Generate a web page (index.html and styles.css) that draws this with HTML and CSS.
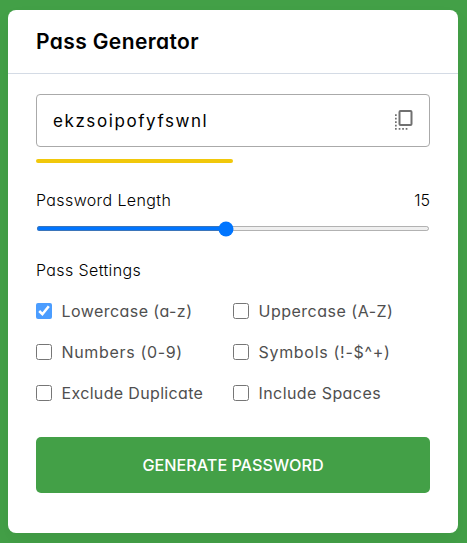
FILE: index.html
```html
<!DOCTYPE html>
<html lang="en">
<head>
<meta charset="utf-8">
<title>Pass Generator</title>
<link rel="stylesheet" href="styles.css">
</head>
<body>
<main class="container">
  <h2 class="title"><span>Pass Generator</span></h2>
  <div class="wrapper">
    <div class="input-box">
      <span class="password">ekzsoipofyfswnl</span>
      <svg class="copy" viewBox="0 0 20 22" width="20" height="22">
        <rect x="5.500" y="1" width="12" height="14" rx="1" fill="none" stroke="#707070" stroke-width="2"/>
        <path fill="#707070" d="M1 4.200h1.700v1.700H1zM1 7.700h1.700v1.700H1zM1 11.200h1.700v1.700H1zM1 14.700h1.700v1.700H1zM1 18.100h1.700v1.700H1zM4.700 18.100h1.700v1.700H4.700zM8.200 18.100h1.700v1.700H8.200zM11.700 18.100h1.700v1.700h-1.700z"/>
      </svg>
    </div>
    <div class="pass-indicator"></div>
    <div class="pass-length">
      <div class="details"><label class="label length-label" for="length">Password Length</label><span class="count">15</span></div>
      <input id="length" type="range" min="1" max="30" value="15">
    </div>
    <div class="pass-settings">
      <p class="label settings-label">Pass Settings</p>
      <ul class="options">
        <li class="option locked"><input type="checkbox" id="lowercase" checked><label class="t1" for="lowercase">Lowercase (a-z)</label></li>
        <li class="option"><input type="checkbox" id="uppercase"><label class="t2" for="uppercase">Uppercase (A-Z)</label></li>
        <li class="option"><input type="checkbox" id="numbers"><label class="t3" for="numbers">Numbers (0-9)</label></li>
        <li class="option"><input type="checkbox" id="symbols"><label class="t4" for="symbols">Symbols (!-$^+)</label></li>
        <li class="option"><input type="checkbox" id="duplicate"><label class="t5" for="duplicate">Exclude Duplicate</label></li>
        <li class="option"><input type="checkbox" id="spaces"><label class="t6" for="spaces">Include Spaces</label></li>
      </ul>
    </div>
    <button class="generate">Generate Password</button>
  </div>
</main>
</body>
</html>
```
FILE: styles.css
```css
* { margin: 0; padding: 0; box-sizing: border-box; }
body {
  min-height: 543px;
  padding: 10px 9px 10px 8px;
  background: #43a047;
  font-family: Inter, "Open Sans", sans-serif;
  font-feature-settings: "cv11";
  color: #000;
}
.container {
  height: 523px;
  background: #fff;
  border-radius: 8px;
  box-shadow: 0 10px 20px rgba(0, 0, 0, 0.05);
}
.title {
  height: 64px;
  padding-left: 28px;
  border-bottom: 1px solid #d4dbe5;
  font-size: 21px;
  font-weight: 600;
  line-height: 64px;
  letter-spacing: 0.38px;
}
.wrapper { padding: 20px 28px 0; }
.input-box {
  display: flex;
  align-items: center;
  justify-content: space-between;
  height: 53px;
  padding: 0 15px 0 16px;
  border: 1px solid #aaa;
  border-radius: 4px;
}
.password { font-size: 17px; letter-spacing: 1.58px; }
.copy { display: block; }
.pass-indicator {
  width: 197px;
  height: 4px;
  margin-top: 12px;
  border-radius: 4px;
  background: #f1c80b;
}
.pass-length { margin-top: 25px; }
.details { display: flex; justify-content: space-between; height: 24px; line-height: 24px; }
.label, .count { font-size: 16px; font-weight: 350; }
.length-label { letter-spacing: 0.38px; }
.pass-length input { display: block; width: 100%; height: 5px; margin-top: 14px; }
.settings-label { margin-top: 27px; line-height: 24px; letter-spacing: 0.38px; }
.options {
  display: grid;
  grid-template-columns: 197px 197px;
  grid-auto-rows: 24px;
  row-gap: 17px;
  margin-top: 17px;
  list-style: none;
}
.option { display: flex; align-items: center; }
.option input { width: 16px; height: 16px; }
.option label { padding-left: 9.5px; color: #4f4f4f; font-size: 16px; font-weight: 400; white-space: nowrap; }
.option .t1 { letter-spacing: 0.44px; }
.option .t2 { letter-spacing: 0.5px; }
.option .t3 { letter-spacing: 0.66px; }
.option .t4 { letter-spacing: 0.7px; }
.option .t5 { letter-spacing: 0.34px; }
.option .t6 { letter-spacing: 0.42px; }
.locked { pointer-events: none; }
.locked input { opacity: 0.7; }
.generate {
  display: block;
  width: 100%;
  height: 56px;
  margin-top: 32px;
  border: 0;
  border-radius: 5px;
  background: #43a047;
  color: #fff;
  font: 500 16.2px Inter, sans-serif;
  text-transform: uppercase;
}
```
